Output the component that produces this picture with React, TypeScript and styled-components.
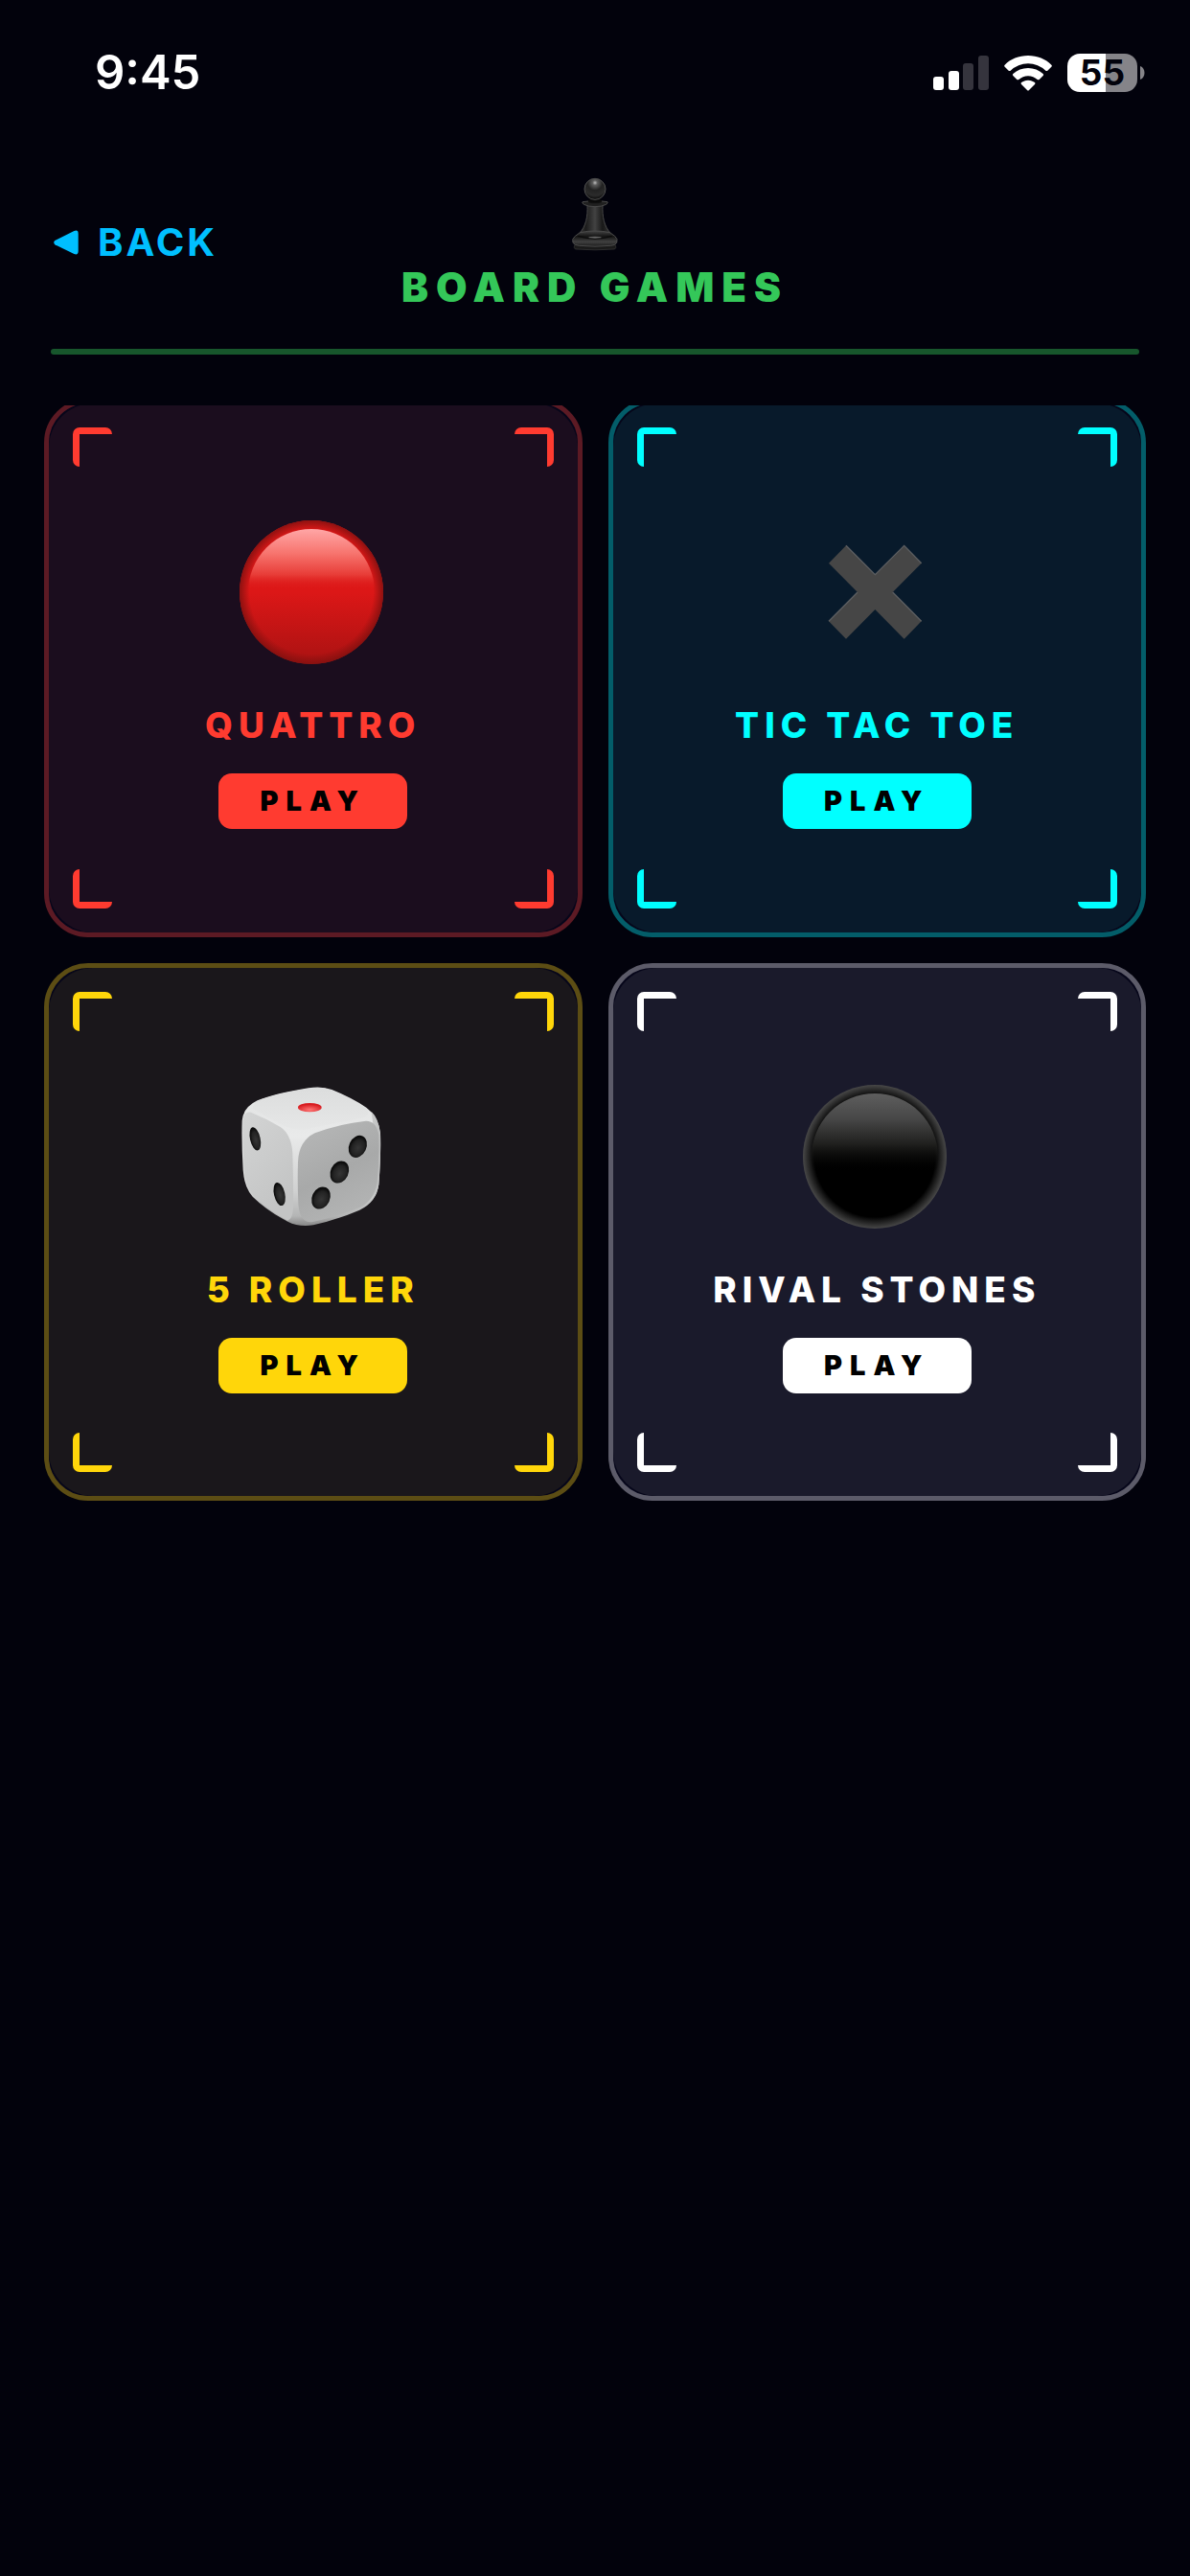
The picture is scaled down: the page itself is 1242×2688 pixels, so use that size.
import React from "react";
import styled, { createGlobalStyle } from "styled-components";

const PAGE = "#02020c";

const GlobalStyle = createGlobalStyle`
  *, *::before, *::after { box-sizing: border-box; }
  body {
    margin: 0;
    background: ${PAGE};
    color: #fff;
    font-family: Inter, "Liberation Sans", sans-serif;
  }
  button { font-family: inherit; cursor: pointer; }
`;

const Screen = styled.div`
  min-height: 100vh;
  background: ${PAGE};
`;

const StatusBar = styled.div`
  display: flex;
  align-items: center;
  justify-content: space-between;
  height: 152px;
  padding: 0 47px 0 99px;
`;

const Clock = styled.time`
  font-size: 49px;
  line-height: 60px;
  font-weight: 600;
  font-feature-settings: "case";
`;

const StatusIcons = styled.div`
  display: flex;
  align-items: center;
  gap: 16px;
`;

const Battery = styled.div`
  display: flex;
  align-items: center;
  gap: 3px;
`;

const BatteryBody = styled.span`
  display: flex;
  align-items: center;
  justify-content: center;
  width: 73px;
  height: 40px;
  border-radius: 13px;
  background: linear-gradient(to right, #fff 55%, #858489 55%);
  color: ${PAGE};
  font-size: 37px;
  line-height: 40px;
  font-weight: 700;
`;

const Header = styled.header`
  display: grid;
  grid-template-columns: 1fr auto 1fr;
  align-items: center;
  height: 202px;
  margin: 0 53px;
`;

const BackButton = styled.button`
  display: flex;
  align-items: center;
  justify-self: start;
  gap: 20px;
  padding: 0 3px;
  border: 0;
  background: none;
  color: #00bfff;
  font-size: 40px;
  line-height: 48px;
  font-weight: 700;
  letter-spacing: 3px;
`;

const Heading = styled.div`
  display: flex;
  flex-direction: column;
  align-items: center;
  gap: 12px;
  padding-top: 5px;
`;

const Title = styled.h1`
  margin: 0;
  color: #34c759;
  font-size: 42px;
  line-height: 52px;
  font-weight: 900;
  letter-spacing: 8px;
`;

const Rule = styled.hr`
  height: 6px;
  margin: 10px 53px 0;
  border: 0;
  border-radius: 3px;
  background: #17562c;
`;

const ScrollArea = styled.main`
  margin-top: 53px;
  overflow: hidden;
`;

const Grid = styled.div`
  display: grid;
  grid-template-columns: 1fr 1fr;
  gap: 27px;
  margin-top: -7px;
  padding: 0 46px 46px;
`;

const Card = styled.article<{ $edge: string }>`
  aspect-ratio: 1;
  border: 5px solid ${(p) => p.$edge};
  border-radius: 46px;
  background: #06061a;
`;

const CardFace = styled.div<{ $fill: string }>`
  position: relative;
  display: flex;
  flex-direction: column;
  align-items: center;
  height: 100%;
  padding-top: 122px;
  border-radius: 46px;
  background: ${(p) => p.$fill};
`;

const Corner = styled.span<{ $color: string; $v: "top" | "bottom"; $h: "left" | "right" }>`
  position: absolute;
  ${(p) => p.$v}: 25px;
  ${(p) => p.$h}: 25px;
  width: 41px;
  height: 41px;
  border: 0 solid ${(p) => p.$color};
  border-${(p) => p.$v}-width: 7px;
  border-${(p) => p.$h}-width: 7px;
  border-radius: 7px;
`;

const Picture = styled.div`
  height: 150px;
  padding-right: 4px;
  svg { display: block; }
`;

const GameName = styled.h2<{ $color: string }>`
  margin: 42px 0 0;
  color: ${(p) => p.$color};
  font-size: 37px;
  line-height: 44px;
  font-weight: 800;
  letter-spacing: 6px;
`;

const PlayButton = styled.button<{ $color: string }>`
  height: 58px;
  margin-top: 28px;
  padding: 0 43px;
  border: 0;
  border-radius: 14px;
  background: ${(p) => p.$color};
  color: #000;
  font-size: 29px;
  line-height: 36px;
  font-weight: 900;
  letter-spacing: 8px;
`;

const Signal = () => (
  <svg width="58" height="38" viewBox="0 0 58 38" aria-hidden="true">
    <rect x="0" y="23" width="11" height="14" rx="3" fill="#fff" />
    <rect x="16" y="17" width="11" height="20" rx="3" fill="#fff" />
    <rect x="31" y="9" width="11" height="28" rx="3" fill="#35343d" />
    <rect x="47" y="1" width="11" height="36" rx="3" fill="#35343d" />
  </svg>
);

const Wifi = () => (
  <svg width="50" height="38" viewBox="0 0 150 114" fill="#fff" aria-hidden="true">
    <path d="M75 3C46 3 20 14 2 32Q-1 35 2 38L14 50Q17 52 20 50A79 79 0 0 1 130 50Q133 52 136 50L148 38Q151 35 148 32C130 14 104 3 75 3Z" />
    <path d="M75 42C57 42 41 49 28 60Q25 63 28 66L40 78Q43 80 46 78A42 42 0 0 1 104 78Q107 80 110 78L122 66Q125 63 122 60C109 49 93 42 75 42Z" />
    <path d="M75 80C66 80 60 83 54 87Q51 90 54 93L72 111Q75 114 78 111L96 93Q99 90 96 87C90 83 84 80 75 80Z" />
  </svg>
);

const BatteryTip = () => (
  <svg width="5" height="14" viewBox="0 0 5 14" aria-hidden="true">
    <path d="M0 0C6 2 6 12 0 14Z" fill="#858489" />
  </svg>
);

const BackArrow = () => (
  <svg width="26" height="26" viewBox="0 0 78 78" aria-hidden="true">
    <path d="M4 33L64 3Q77-2 77 11V66Q77 80 64 75L4 46Q-3 39 4 33Z" fill="currentColor" />
  </svg>
);

const Pawn = () => (
  <svg width="50" height="77" viewBox="585 45 150 231" role="img" aria-label="Pawn">
    <defs>
      <radialGradient id="pawnHead" cx=".5" cy=".2" r=".8">
        <stop offset="0" stopColor="#bbb" />
        <stop offset=".15" stopColor="#5c5c5c" />
        <stop offset=".45" stopColor="#222" />
        <stop offset=".75" stopColor="#2c2c2c" />
        <stop offset="1" stopColor="#080808" />
      </radialGradient>
      <linearGradient id="pawnBody">
        <stop offset="0" stopColor="#3a3a3a" />
        <stop offset=".2" stopColor="#1c1c1c" />
        <stop offset=".5" stopColor="#424242" />
        <stop offset=".75" stopColor="#181818" />
        <stop offset="1" stopColor="#363636" />
      </linearGradient>
      <linearGradient id="pawnBase" x2="0" y2="1">
        <stop offset="0" stopColor="#444" />
        <stop offset=".35" stopColor="#151515" />
        <stop offset=".7" stopColor="#404040" />
        <stop offset="1" stopColor="#1c1c1c" />
      </linearGradient>
    </defs>
    <path d="M597 256H723Q729 268 720 270Q660 275 600 270Q591 268 597 256Z" fill="#1a1a1a" stroke="#3a3a3a" strokeWidth="2" />
    <path d="M636 132C638 168 631 199 612 219H708C689 199 682 168 684 132Z" fill="url(#pawnBody)" stroke="#484848" strokeWidth="3" />
    <path d="M613 218Q660 208 707 218L722 229Q733 238 728 250Q724 258 710 259Q660 264 610 259Q596 258 591 250Q586 238 598 229Z" fill="url(#pawnBase)" stroke="#4a4a4a" strokeWidth="3" />
    <path d="M607 229Q660 245 713 229" fill="none" stroke="#0b0b0b" strokeWidth="4" />
    <ellipse cx="660" cy="233" rx="20" ry="3" fill="#666" />
    <path d="M621 122Q660 114 699 122Q702 126 695 130Q682 137 660 137Q638 137 625 130Q618 126 621 122Z" fill="#202020" stroke="#4a4a4a" strokeWidth="3" />
    <ellipse cx="660" cy="120" rx="22" ry="7" fill="#101010" />
    <path d="M645 109H675L680 120Q660 127 640 120Z" fill="#0b0b0b" />
    <circle cx="660" cy="82" r="33" fill="url(#pawnHead)" stroke="#505050" strokeWidth="3" />
  </svg>
);

const RedDisc = () => (
  <svg width="150" height="150" viewBox="0 0 150 150" role="img" aria-label="Red disc">
    <defs>
      <linearGradient id="redBase" x2="0" y2="1">
        <stop offset="0" stopColor="#e01818" />
        <stop offset=".5" stopColor="#dc1717" />
        <stop offset="1" stopColor="#aa1212" />
      </linearGradient>
      <radialGradient id="redRim">
        <stop offset=".86" stopColor="#80100f" stopOpacity="0" />
        <stop offset="1" stopColor="#80100f" stopOpacity=".85" />
      </radialGradient>
      <linearGradient id="redShine" x2="0" y2="1">
        <stop offset="0" stopColor="#ffa6a6" />
        <stop offset=".19" stopColor="#f7756f" />
        <stop offset=".36" stopColor="#e83d38" />
        <stop offset=".48" stopColor="#dc1717" stopOpacity="0" />
      </linearGradient>
    </defs>
    <circle cx="75" cy="75" r="75" fill="url(#redBase)" />
    <circle cx="75" cy="75" r="75" fill="url(#redRim)" />
    <circle cx="75" cy="75" r="66" fill="url(#redShine)" />
  </svg>
);

const Cross = () => (
  <svg width="150" height="150" viewBox="293 129 450 450" role="img" aria-label="Cross">
    <path d="M428 208L519 299L610 208L664 263L574 354L664 445L610 500L519 408L428 500L374 445L464 354L374 263Z" fill="#464646" />
    <path d="M428 208L519 299L610 208L664 263M574 354L664 445M464 354L374 445" fill="none" stroke="#5c5e61" strokeWidth="4" />
  </svg>
);

const Die = () => (
  <svg width="150" height="150" viewBox="149 128 450 450" role="img" aria-label="Die">
    <defs>
      <linearGradient id="dieTop" x2="0" y2="1">
        <stop offset="0" stopColor="#dcdddd" />
        <stop offset="1" stopColor="#e6e7e7" />
      </linearGradient>
      <linearGradient id="dieLeft" x2=".5" y2="1">
        <stop offset="0" stopColor="#d3d4d4" />
        <stop offset="1" stopColor="#c3c4c4" />
      </linearGradient>
      <linearGradient id="dieRight" x2=".4" y2="1">
        <stop offset="0" stopColor="#b8b9b9" />
        <stop offset=".6" stopColor="#a8a9a9" />
        <stop offset="1" stopColor="#b2b3b3" />
      </linearGradient>
      <linearGradient id="dieBody" x2="0" y2="1">
        <stop offset="0" stopColor="#e0e1e1" />
        <stop offset=".35" stopColor="#e9eaea" />
        <stop offset=".75" stopColor="#d0d1d1" />
        <stop offset=".93" stopColor="#b4b5b5" />
        <stop offset="1" stopColor="#888" />
      </linearGradient>
      <linearGradient id="dieEdge">
        <stop offset="0" stopColor="#c9caca" />
        <stop offset="1" stopColor="#bfc0c0" />
      </linearGradient>
      <radialGradient id="pip" cx=".55" cy=".55">
        <stop offset="0" stopColor="#353535" />
        <stop offset=".7" stopColor="#222" />
        <stop offset="1" stopColor="#0b0b0b" />
      </radialGradient>
      <radialGradient id="redPip" cx=".5" cy=".75" r=".6">
        <stop offset="0" stopColor="#ff7777" />
        <stop offset="1" stopColor="#d81c20" />
      </radialGradient>
    </defs>
    <path d="M157 240Q160 199 205 177Q260 155 365 138Q405 131 438 143Q500 168 546 199Q584 226 590 280Q592 350 585 440Q578 495 525 520Q455 550 380 567Q335 574 300 556Q235 522 190 478Q164 450 160 395Q155 310 157 240Z" fill="url(#dieBody)" />
    <path d="M562 212Q584 232 590 280Q592 350 585 440Q581 468 565 488Q586 380 562 212Z" fill="url(#dieEdge)" />
    <path d="M190 203Q190 183 220 172Q300 148 380 138Q412 135 440 146Q505 173 546 202Q560 218 540 230Q440 250 360 266Q320 272 285 255Q235 228 190 203Z" fill="url(#dieTop)" />
    <path d="M159 240Q162 211 185 214Q230 232 277 260Q311 283 315 340Q318 430 317 515Q314 550 299 553Q235 518 192 474Q168 448 163 390Q158 310 159 240Z" fill="url(#dieLeft)" />
    <path d="M332 370Q334 304 385 279Q460 250 545 241Q578 241 585 285Q588 360 580 436Q570 490 525 512Q460 539 375 558Q337 560 333 500Q330 430 332 370Z" fill="url(#dieRight)" />
    <ellipse cx="369" cy="199" rx="37" ry="14" fill="url(#redPip)" />
    <ellipse cx="198" cy="297" rx="16" ry="37" transform="rotate(-13 198 297)" fill="url(#pip)" />
    <ellipse cx="274" cy="470" rx="17" ry="37" transform="rotate(-13 274 470)" fill="url(#pip)" />
    <ellipse cx="519" cy="321" rx="27" ry="36" transform="rotate(25 519 321)" fill="url(#pip)" />
    <ellipse cx="462" cy="401" rx="28" ry="36" transform="rotate(25 462 401)" fill="url(#pip)" />
    <ellipse cx="404" cy="482" rx="28" ry="36" transform="rotate(25 404 482)" fill="url(#pip)" />
  </svg>
);

const BlackStone = () => (
  <svg width="150" height="150" viewBox="0 0 150 150" role="img" aria-label="Black stone">
    <defs>
      <radialGradient id="stoneRim">
        <stop offset=".84" stopColor="#000" />
        <stop offset="1" stopColor="#484848" />
      </radialGradient>
      <linearGradient id="stoneShine" x2="0" y2="1">
        <stop offset="0" stopColor="#5e5e5e" />
        <stop offset=".2" stopColor="#474747" />
        <stop offset=".4" stopColor="#20201e" />
        <stop offset=".62" stopColor="#000" stopOpacity="0" />
      </linearGradient>
    </defs>
    <circle cx="75" cy="75" r="75" fill="url(#stoneRim)" />
    <circle cx="75" cy="75" r="66" fill="url(#stoneShine)" />
  </svg>
);

interface Game {
  name: string;
  color: string;
  edge: string;
  fill: string;
  Icon: React.ComponentType;
}

const games: Game[] = [
  { name: "QUATTRO", color: "#ff3b30", edge: "#5c1a24", fill: "#1b0d1e", Icon: RedDisc },
  { name: "TIC TAC TOE", color: "#00ffff", edge: "#035d69", fill: "#081a2b", Icon: Cross },
  { name: "5 ROLLER", color: "#ffd60a", edge: "#5c4d14", fill: "#1a171b", Icon: Die },
  { name: "RIVAL STONES", color: "#ffffff", edge: "#5c5b69", fill: "#1a1a2b", Icon: BlackStone },
];

const GameCard = ({ name, color, edge, fill, Icon }: Game) => (
  <Card $edge={edge}>
    <CardFace $fill={fill}>
      <Corner $color={color} $v="top" $h="left" />
      <Corner $color={color} $v="top" $h="right" />
      <Corner $color={color} $v="bottom" $h="left" />
      <Corner $color={color} $v="bottom" $h="right" />
      <Picture>
        <Icon />
      </Picture>
      <GameName $color={color}>{name}</GameName>
      <PlayButton type="button" $color={color}>PLAY</PlayButton>
    </CardFace>
  </Card>
);

export default function App() {
  return (
    <Screen>
      <GlobalStyle />
      <StatusBar>
        <Clock>9:45</Clock>
        <StatusIcons>
          <Signal />
          <Wifi />
          <Battery>
            <BatteryBody>55</BatteryBody>
            <BatteryTip />
          </Battery>
        </StatusIcons>
      </StatusBar>
      <Header>
        <BackButton type="button">
          <BackArrow />
          BACK
        </BackButton>
        <Heading>
          <Pawn />
          <Title>BOARD GAMES</Title>
        </Heading>
      </Header>
      <Rule />
      <ScrollArea>
        <Grid>
          {games.map((game) => (
            <GameCard key={game.name} {...game} />
          ))}
        </Grid>
      </ScrollArea>
    </Screen>
  );
}
